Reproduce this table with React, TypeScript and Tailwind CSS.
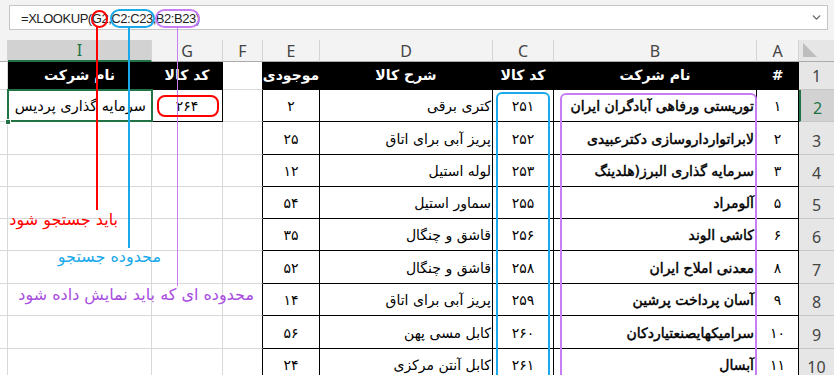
import type { ReactNode } from "react";
import { ChevronDown } from "lucide-react";

const fa = "font-['DejaVu_Sans',sans-serif]";
const ui = "font-['Noto_Sans',sans-serif]";

type CellProps = { w: string; className?: string; children?: ReactNode };

function Cell({ w, className = "", children }: CellProps) {
  return (
    <div className={`${w} shrink-0 h-full box-border border-r border-b flex items-center whitespace-nowrap overflow-hidden ${className}`}>
      {children}
    </div>
  );
}

const grid = "border-r-[#d9d9d9] border-b-[#d9d9d9]";
const tbl = "border-r-black border-b-black";

const rows = [
  { n: "2", h: "h-[32px]", a: "۱", b: "توریستی ورفاهی آبادگران ایران", c: "۲۵۱", d: "کتری برقی", e: "۲" },
  { n: "3", h: "h-[33px]", a: "۲", b: "لابراتوارداروسازی دکترعبیدی", c: "۲۵۲", d: "پریز آبی برای اتاق", e: "۲۵" },
  { n: "4", h: "h-[32px]", a: "۳", b: "سرمایه گذاری البرز(هلدینگ", c: "۲۵۳", d: "لوله استیل", e: "۱۲" },
  { n: "5", h: "h-[32px]", a: "۵", b: "آلومراد", c: "۲۵۵", d: "سماور استیل", e: "۵۴" },
  { n: "6", h: "h-[32px]", a: "۶", b: "کاشی الوند", c: "۲۵۶", d: "قاشق و چنگال", e: "۳۵" },
  { n: "7", h: "h-[33px]", a: "۸", b: "معدنی املاح ایران", c: "۲۵۸", d: "قاشق و چنگال", e: "۵۲" },
  { n: "8", h: "h-[32px]", a: "۹", b: "آسان پرداخت پرشین", c: "۲۵۹", d: "پریز آبی برای اتاق", e: "۱۴" },
  { n: "9", h: "h-[33px]", a: "۱۰", b: "سرامیکهایصنعتیاردکان", c: "۲۶۰", d: "کابل مسی پهن", e: "۵۶" },
  { n: "10", h: "h-[32px]", a: "۱۱", b: "آبسال", c: "۲۶۱", d: "کابل آنتن مرکزی", e: "۲۴" },
];

function ColHead({ w, label, selected }: { w: string; label: string; selected?: boolean }) {
  return (
    <div
      className={`${w} shrink-0 h-full box-border flex items-center justify-center border-r border-r-[#d4d4d4] text-[16px] ${ui} ${
        selected ? "bg-[#d2d2d2] text-[#217346] border-b-2 border-b-[#217346]" : "bg-[#f3f3f3] text-[#444] border-b border-b-[#ababab]"
      }`}
    >
      {label}
    </div>
  );
}

function RowHead({ n, selected }: { n: string; selected?: boolean }) {
  return (
    <div
      className={`w-[35px] shrink-0 h-full box-border border-b border-b-[#c6c6c6] flex items-end justify-center pb-[1px] text-[16px] ${ui} ${
        selected ? "bg-[#d2d2d2] text-[#217346] border-l-2 border-l-[#217346]" : "bg-[#e6e6e6] text-[#444]"
      }`}
    >
      {n}
    </div>
  );
}

const head = `bg-black text-white font-bold justify-center text-[14px] ${fa}`;

export default function App() {
  return (
    <div className="relative w-[834px] h-[375px] overflow-hidden bg-white">
      {/* formula bar */}
      <div className="h-[40px] bg-[#f3f3f3] pt-[5px] pl-[9px] pr-[6px]">
        <div className="h-[25px] bg-white border border-[#c6c6c6] flex items-center justify-between pl-[11px] pr-[4px]">
          <span className="font-['Liberation_Sans',sans-serif] text-[13px] tracking-[-0.45px] text-[#222] leading-none pt-[1px]">
            =XLOOKUP(G2,C2:C23,B2:B23)
          </span>
          <ChevronDown size={13} strokeWidth={2.5} className="text-[#666]" />
        </div>
      </div>

      {/* column headers */}
      <div className="flex h-[22px]">
        <ColHead w="w-[8px]" label="" />
        <ColHead w="w-[144px]" label="I" selected />
        <ColHead w="w-[71px]" label="G" />
        <ColHead w="w-[40px]" label="F" />
        <ColHead w="w-[57px]" label="E" />
        <ColHead w="w-[173px]" label="D" />
        <ColHead w="w-[61px]" label="C" />
        <ColHead w="w-[203px]" label="B" />
        <ColHead w="w-[42px]" label="A" />
        <div className="w-[35px] shrink-0 h-full bg-[#e6e6e6] border-b border-b-[#ababab] flex items-end pl-[4px] pb-[4px]">
          <div className="w-0 h-0 border-l-[14px] border-l-[#bdbdbd] border-t-[14px] border-t-transparent" />
        </div>
      </div>

      {/* header row */}
      <div className="flex h-[28px]">
        <Cell w="w-[8px]" className={grid} />
        <Cell w="w-[144px]" className={`${head} border-r-black border-b-black`}>نام شرکت</Cell>
        <Cell w="w-[71px]" className={`${head} border-r-black border-b-black`}>کد کالا</Cell>
        <Cell w="w-[40px]" className="border-r-black border-b-[#d9d9d9]" />
        <Cell w="w-[57px]" className={`${head} border-r-black border-b-black`}>موجودی</Cell>
        <Cell w="w-[173px]" className={`${head} border-r-black border-b-black`}>شرح کالا</Cell>
        <Cell w="w-[61px]" className={`${head} border-r-black border-b-black`}>کد کالا</Cell>
        <Cell w="w-[203px]" className={`${head} border-r-black border-b-black`}>نام شرکت</Cell>
        <Cell w="w-[42px]" className={`${head} border-r-black border-b-black`}>#</Cell>
        <RowHead n="1" />
      </div>

      {/* data rows */}
      {rows.map((r, i) => (
        <div key={r.n} className={`flex ${r.h} ${fa} text-[14px] text-black`}>
          <Cell w="w-[8px]" className={grid} />
          {i === 0 ? (
            <Cell w="w-[144px]" className={`${grid} relative justify-end pr-[5px] pt-[2px] !overflow-visible text-[14.5px]`}>
              <span dir="rtl">سرمایه گذاری پردیس</span>
              <div className="absolute -left-px -top-px w-[146px] h-[33px] border-2 border-[#217346]" />
              <div className="absolute -left-[3px] -bottom-[4px] w-[6px] h-[6px] bg-[#217346] border border-white" />
            </Cell>
          ) : (
            <Cell w="w-[144px]" className={grid} />
          )}
          {i === 0 ? (
            <Cell w="w-[71px]" className={`${tbl} justify-center pt-[2px]`}>۲۶۴</Cell>
          ) : (
            <Cell w="w-[71px]" className={grid} />
          )}
          <Cell w="w-[40px]" className="border-r-black border-b-[#d9d9d9]" />
          <Cell w="w-[57px]" className={`${tbl} justify-center pt-[2px]`}>{r.e}</Cell>
          <Cell w="w-[173px]" className={`${tbl} justify-end pr-[1px] pt-[2px]`}>
            <span dir="rtl">{r.d}</span>
          </Cell>
          <Cell w="w-[61px]" className={`${tbl} justify-center pt-[2px]`}>{r.c}</Cell>
          <Cell w="w-[203px]" className={`${tbl} justify-end pr-[2px] pt-[2px] text-[14px] [-webkit-text-stroke:0.45px_black]`}>
            <span dir="rtl">{r.b}</span>
          </Cell>
          <Cell w="w-[42px]" className={`${tbl} justify-center pt-[2px]`}>{r.a}</Cell>
          <RowHead n={r.n} selected={i === 0} />
        </div>
      ))}

      {/* annotations */}
      <div className="absolute left-[91px] top-[10px] w-[17px] h-[18px] rounded-full border-2 border-[#ff0000]" />
      <div className="absolute left-[110px] top-[9px] w-[45px] h-[19px] rounded-full border-2 border-[#1aa9ea]" />
      <div className="absolute left-[155px] top-[9px] w-[45px] h-[19px] rounded-full border-2 border-[#c77df3]" />

      <div className="absolute left-[96px] top-[27px] w-[1.5px] h-[183px] bg-[#ff0000]" />
      <div className="absolute left-[128px] top-[27px] w-[1.5px] h-[221px] bg-[#1aa9ea]" />
      <div className="absolute left-[177px] top-[27px] w-px h-[259px] bg-[#c77df3]" />

      <div className="absolute left-[157px] top-[95px] w-[62px] h-[22px] rounded-[8px] border-2 border-[#ff0000]" />
      <div className="absolute left-[496px] top-[92px] w-[54px] h-[300px] rounded-[6px] border-2 border-[#1aa9ea]" />
      <div className="absolute left-[560px] top-[93px] w-[197px] h-[300px] rounded-[6px] border-2 border-[#c77df3]" />

      <div dir="rtl" className={`absolute right-[716px] top-[208px] ${fa} text-[16px] text-[#ff0000] whitespace-nowrap`}>
        باید جستجو شود
      </div>
      <div dir="rtl" className={`absolute right-[673px] top-[245px] ${fa} text-[16px] text-[#1aa9ea] whitespace-nowrap`}>
        محدوده جستجو
      </div>
      <div dir="rtl" className={`absolute right-[580px] top-[283px] ${fa} text-[16px] text-[#a94ee0] whitespace-nowrap`}>
        محدوده ای که باید نمایش داده شود
      </div>
    </div>
  );
}
